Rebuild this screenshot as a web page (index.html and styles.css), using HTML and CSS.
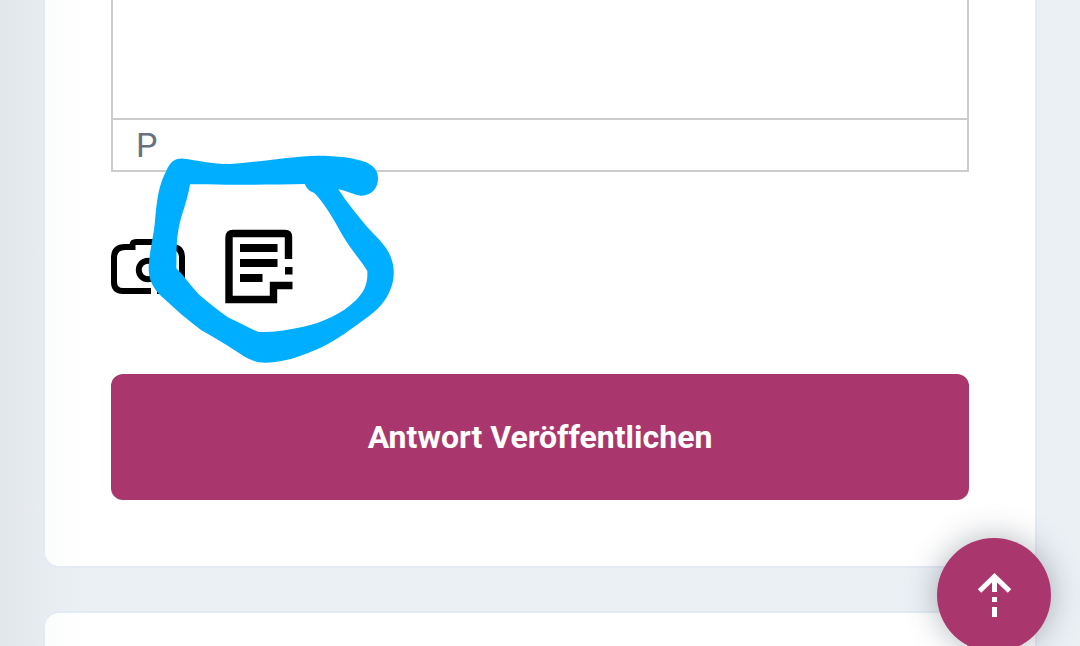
FILE: index.html
```html
<!DOCTYPE html>
<html lang="de">
<head>
<meta charset="utf-8">
<meta name="viewport" content="width=device-width, initial-scale=1">
<title>Antwort</title>
<link rel="stylesheet" href="styles.css">
</head>
<body>
<main class="page">
  <form class="card card-answer">
    <div class="editor">
      <textarea class="editor-input" aria-label="Antwort"></textarea>
      <div class="editor-status">P</div>
    </div>
    <div class="tools">
      <button class="tool" type="button" aria-label="Foto">
        <svg width="75" height="75" viewBox="0 0 75 75" fill="none" stroke="#000" stroke-width="6">
          <path d="M40 62H12Q3 62 3 53V29Q3 18 14 18H21.500V16Q21.500 13 25 13H48Q52 13 52 18H61Q71 18 71 29V53Q71 62 62 62H46"/>
          <circle cx="37" cy="41" r="9.200"/>
        </svg>
      </button>
      <button class="tool" type="button" aria-label="Notiz">
        <svg width="75" height="75" viewBox="0 0 75 75">
          <path fill="none" stroke="#000" stroke-width="7.400" d="M63.500 30V8Q63.500 4.500 60 4.500H8Q4 4.500 4 8.500V70.500H48.500V56.500H67.500"/>
          <path d="M15 15h37.500v8H15zM15 30h37.500v8H15zM15 45h22.500v8H15zM60 38h7.500v7.500H60z"/>
        </svg>
      </button>
      <svg class="marker" width="310" height="280" viewBox="0 0 930 840" aria-hidden="true">
        <path fill="#00aeff" fill-rule="evenodd" d="M250 176C290 180 335 192 390 192C470 188 570 168 655 167C710 167 765 173 798 187C822 198 834 214 834 235C834 267 813 288 783 287C762 286 745 273 715 268C740 308 772 345 801 380C830 411 860 438 872 470C885 501 883 537 874 561C858 607 832 629 798 655C754 687 712 719 665 742C610 766 558 788 496 788C464 787 446 778 427 766C384 737 348 716 304 691C263 661 222 624 184 589C158 563 145 537 146 500C150 440 162 409 166 350C172 288 178 252 200 210C210 188 224 174 250 176ZM270 253C330 251 380 256 430 254C490 254 550 253 615 252C620 266 628 274 643 279C675 312 701 358 727 405C750 445 779 476 802 513C804 552 792 577 766 602C725 642 665 668 610 680C566 689 519 698 476 696C444 683 417 666 386 653C351 629 322 606 296 583C271 557 253 528 229 505C230 465 228 425 236 385C244 342 263 301 270 253Z"/>
      </svg>
    </div>
    <button class="submit" type="button">Antwort Veröffentlichen</button>
  </form>
  <section class="card card-next"></section>
</main>
<button class="to-top" type="button" aria-label="Nach oben">
  <svg width="34" height="44" viewBox="0 0 34 44" fill="none" stroke="#fff" stroke-width="5">
    <path d="M2.500 18L17.500 3.500L32.500 18M17.500 3V19M17.500 24V29M17.500 34V44"/>
  </svg>
</button>
</body>
</html>
```
FILE: styles.css
```css
* {
  box-sizing: border-box;
}

body {
  margin: 0;
  background: #ebf0f5;
  font-family: Roboto, "Liberation Sans", sans-serif;
}

.page {
  display: flex;
  flex-direction: column;
  gap: 43px;
  height: 100vh;
  padding: 0 43px;
  overflow: hidden;
  background: linear-gradient(to right, #e2e7ea, #e6eaee 24px, #ebf0f5 80px);
}

.card {
  border: 2px solid #e4eaf4;
  border-radius: 16px;
  background: linear-gradient(to right, #fbfcfc, #fff 40px);
}

.card-answer {
  flex: none;
  padding: 0 66px 66px;
  border-top: 0;
  border-top-left-radius: 0;
  border-top-right-radius: 0;
}

.card-next {
  flex: 1;
  border-bottom: 0;
  border-bottom-left-radius: 0;
  border-bottom-right-radius: 0;
}

.editor {
  border: 2px solid #ccc;
  border-top: 0;
  background: #fff;
}

.editor-input {
  display: block;
  width: 100%;
  height: 118px;
  padding: 24px;
  border: 0;
  outline: 0;
  background: transparent;
  font: inherit;
  font-size: 32px;
  resize: none;
}

.editor-status {
  padding: 0 23px;
  border-top: 2px solid #ccc;
  color: #68727d;
  font-size: 34px;
  line-height: 50px;
}

.tools {
  position: relative;
  display: flex;
  gap: 39px;
  margin: 57px 0 70px;
}

.tool {
  padding: 0;
  border: 0;
  background: none;
}

.tool svg {
  display: block;
}

/* Freehand marker stroke lying over the tool icons */
.marker {
  position: absolute;
  top: -129px;
  left: -11px;
  pointer-events: none;
}

.submit {
  display: block;
  width: 100%;
  padding: 43px 24px;
  border: 0;
  border-radius: 12px;
  background: #a9376d;
  color: #fff;
  font: inherit;
  font-size: 32px;
  font-weight: 700;
  line-height: 40px;
}

.to-top {
  position: fixed;
  right: 29px;
  bottom: -6px;
  display: flex;
  align-items: center;
  justify-content: center;
  width: 114px;
  height: 114px;
  padding: 0;
  border: 0;
  border-radius: 50%;
  background: #a9376d;
  box-shadow: 0 0 32px rgba(60, 70, 85, 0.4);
}
```
